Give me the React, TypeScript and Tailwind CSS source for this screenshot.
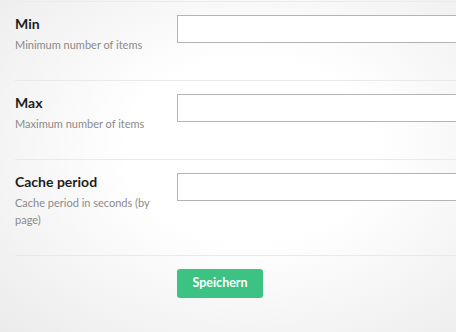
import React from "react";

const fields = [
  { label: "Min", help: "Minimum number of items", h: "h-[79px]" },
  { label: "Max", help: "Maximum number of items", h: "h-[79px]" },
  { label: "Cache period", help: "Cache period in seconds (by page)", h: "h-[96px]" },
];

export default function App() {
  return (
    <div className="h-[332px] w-[456px] overflow-hidden bg-[radial-gradient(ellipse_at_55%_45%,#ffffff_35%,#ebebeb_100%)] font-['Lato',sans-serif]">
      <div className="ml-[15px] mt-px border-t border-[#ececec]">
        {fields.map((f) => (
          <div key={f.label} className={`flex border-b border-[#e9e9e9] ${f.h}`}>
            <div className="w-[162px] shrink-0 pt-[13px]">
              <div className="text-[14px] font-bold leading-[18px] text-[#1e1e1e]">{f.label}</div>
              <div className="mt-[3px] w-[140px] text-[11px] leading-[17px] text-[#8a8a8a]">{f.help}</div>
            </div>
            <div className="pt-[13px]">
              <input type="text" className="h-[28px] w-[320px] border border-[#b4b4b4] bg-white outline-none" />
            </div>
          </div>
        ))}
        <div className="pl-[162px] pt-[13px]">
          <button type="button" className="h-[29px] w-[86px] rounded-[3px] bg-[#3cc283] text-[12.5px] font-bold text-white">
            Speichern
          </button>
        </div>
      </div>
    </div>
  );
}
